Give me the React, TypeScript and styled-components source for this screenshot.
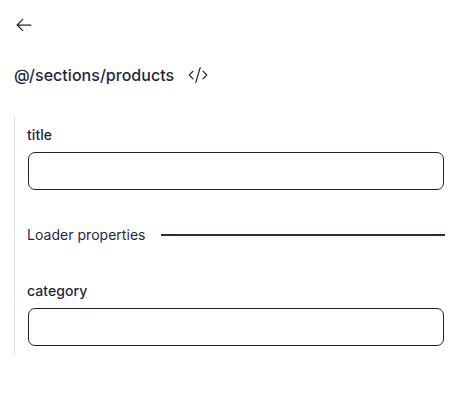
import React from "react";
import styled, { createGlobalStyle } from "styled-components";

const GlobalStyle = createGlobalStyle`
  *, *::before, *::after { box-sizing: border-box; }
  body {
    margin: 0;
    background: #fff;
    color: #1e293b;
    font-family: Inter, sans-serif;
  }
`;

const Panel = styled.main`
  display: flex;
  flex-direction: column;
  min-height: 401px;
  padding: 15px 14px 0;
`;

const IconButton = styled.button`
  display: flex;
  flex: none;
  width: 20px;
  height: 20px;
  padding: 0;
  border: 0;
  background: none;
  color: inherit;
`;

const Heading = styled.header`
  display: flex;
  align-items: center;
  gap: 14px;
  height: 24px;
  margin-top: 28px;
`;

const Title = styled.h1`
  margin: 0;
  font-size: 16px;
  line-height: 24px;
  font-weight: 500;
  letter-spacing: 0.025px;
`;

const Form = styled.form`
  display: flex;
  flex-direction: column;
  height: 240px;
  margin-top: 28px;
  padding: 10px 0 0 12px;
  border-left: 1px solid #e5e6e9;
`;

const Field = styled.label`
  display: flex;
  flex-direction: column;
  gap: 7px;
`;

const FieldName = styled.span`
  font-size: 14px;
  line-height: 20px;
  font-weight: 500;
  letter-spacing: 0.06px;
`;

const Input = styled.input`
  height: 38px;
  margin: 0 1px;
  padding: 0 12px;
  border: 1px solid #1b2337;
  border-radius: 7px;
  background: #fff;
  font: inherit;
  outline: none;
`;

const Divider = styled.div`
  display: flex;
  align-items: center;
  height: 20px;
  margin: 35px 0 36px;
  font-size: 14px;
  line-height: 20px;
  letter-spacing: 0.03px;

  &::after {
    content: "";
    flex: 1;
    height: 2px;
    margin-left: 15.5px;
    background: #253044;
  }
`;

const Icon = ({ path }: { path: string }) => (
  <svg width="20" height="20" viewBox="0 0 256 256" fill="none" stroke="currentColor" strokeWidth="16" strokeLinecap="round" strokeLinejoin="round">
    <path d={path} />
  </svg>
);

const TextField = ({ name }: { name: string }) => (
  <Field>
    <FieldName>{name}</FieldName>
    <Input type="text" name={name} />
  </Field>
);

export default function App() {
  return (
    <>
      <GlobalStyle />
      <Panel>
        <IconButton aria-label="Back">
          <Icon path="M216 128H40M112 56 40 128l72 72" />
        </IconButton>
        <Heading>
          <Title>@/sections/products</Title>
          <IconButton aria-label="View source">
            <Icon path="M64 78 16 128l48 50M192 78l48 50-48 50M156 34 100 222" />
          </IconButton>
        </Heading>
        <Form>
          <TextField name="title" />
          <Divider>Loader properties</Divider>
          <TextField name="category" />
        </Form>
      </Panel>
    </>
  );
}
